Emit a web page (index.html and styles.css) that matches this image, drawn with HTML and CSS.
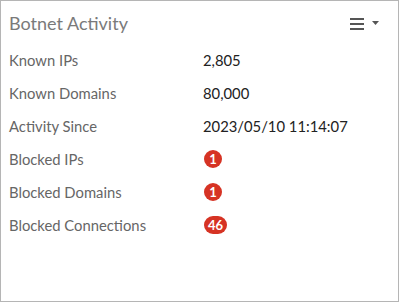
FILE: index.html
```html
<!DOCTYPE html>
<html>
<head>
<meta charset="utf-8">
<link rel="stylesheet" href="styles.css">
</head>
<body>
<div class="card">
  <div class="header">
    <div class="title">Botnet Activity</div>
    <div class="menu">
      <svg width="14" height="12" viewBox="0 0 14 12"><rect x="0" y="0" width="14" height="2" fill="#555"/><rect x="0" y="5" width="14" height="2" fill="#555"/><rect x="0" y="10" width="14" height="2" fill="#555"/></svg>
      <svg class="caret" width="7" height="4" viewBox="0 0 7 4"><path d="M0 0 L7 0 L3.5 4 Z" fill="#555"/></svg>
    </div>
  </div>
  <div class="rows">
    <div class="row"><div class="label">Known IPs</div><div class="value">2,805</div></div>
    <div class="row"><div class="label">Known Domains</div><div class="value">80,000</div></div>
    <div class="row"><div class="label">Activity Since</div><div class="value">2023/05/10 11:14:07</div></div>
    <div class="row"><div class="label">Blocked IPs</div><div class="value"><span class="badge">1</span></div></div>
    <div class="row"><div class="label">Blocked Domains</div><div class="value"><span class="badge">1</span></div></div>
    <div class="row"><div class="label">Blocked Connections</div><div class="value"><span class="badge">46</span></div></div>
  </div>
</div>
</body>
</html>
```
FILE: styles.css
```css
html, body { margin: 0; padding: 0; background: #fff; }
body { font-family: Lato, "Open Sans", sans-serif; }
.card {
  width: 399px; height: 302px; box-sizing: border-box;
  border: 1px solid #b5b5b5; background: #fff;
}
.header {
  display: flex; justify-content: space-between; align-items: center;
  padding: 9px 19px 0 8px; height: 26px;
}
.title { font-size: 18px; color: #7a7a7a; }
.menu { display: flex; align-items: center; gap: 8px; padding-top: 1px; }
.caret { margin-top: -1px; }
.rows { padding: 7px 8px 0 8px; }
.row { display: flex; height: 33px; align-items: center; font-size: 14.8px; }
.label { width: 194px; color: #666; }
.value { color: #222; }
.badge {
  display: inline-block; background: #d63324; color: #fff; font-weight: bold;
  font-size: 13px; line-height: 18px; min-width: 18px; padding: 0 4px; box-sizing: border-box;
  border-radius: 9px; text-align: center; margin-left: 1px;
}
```
